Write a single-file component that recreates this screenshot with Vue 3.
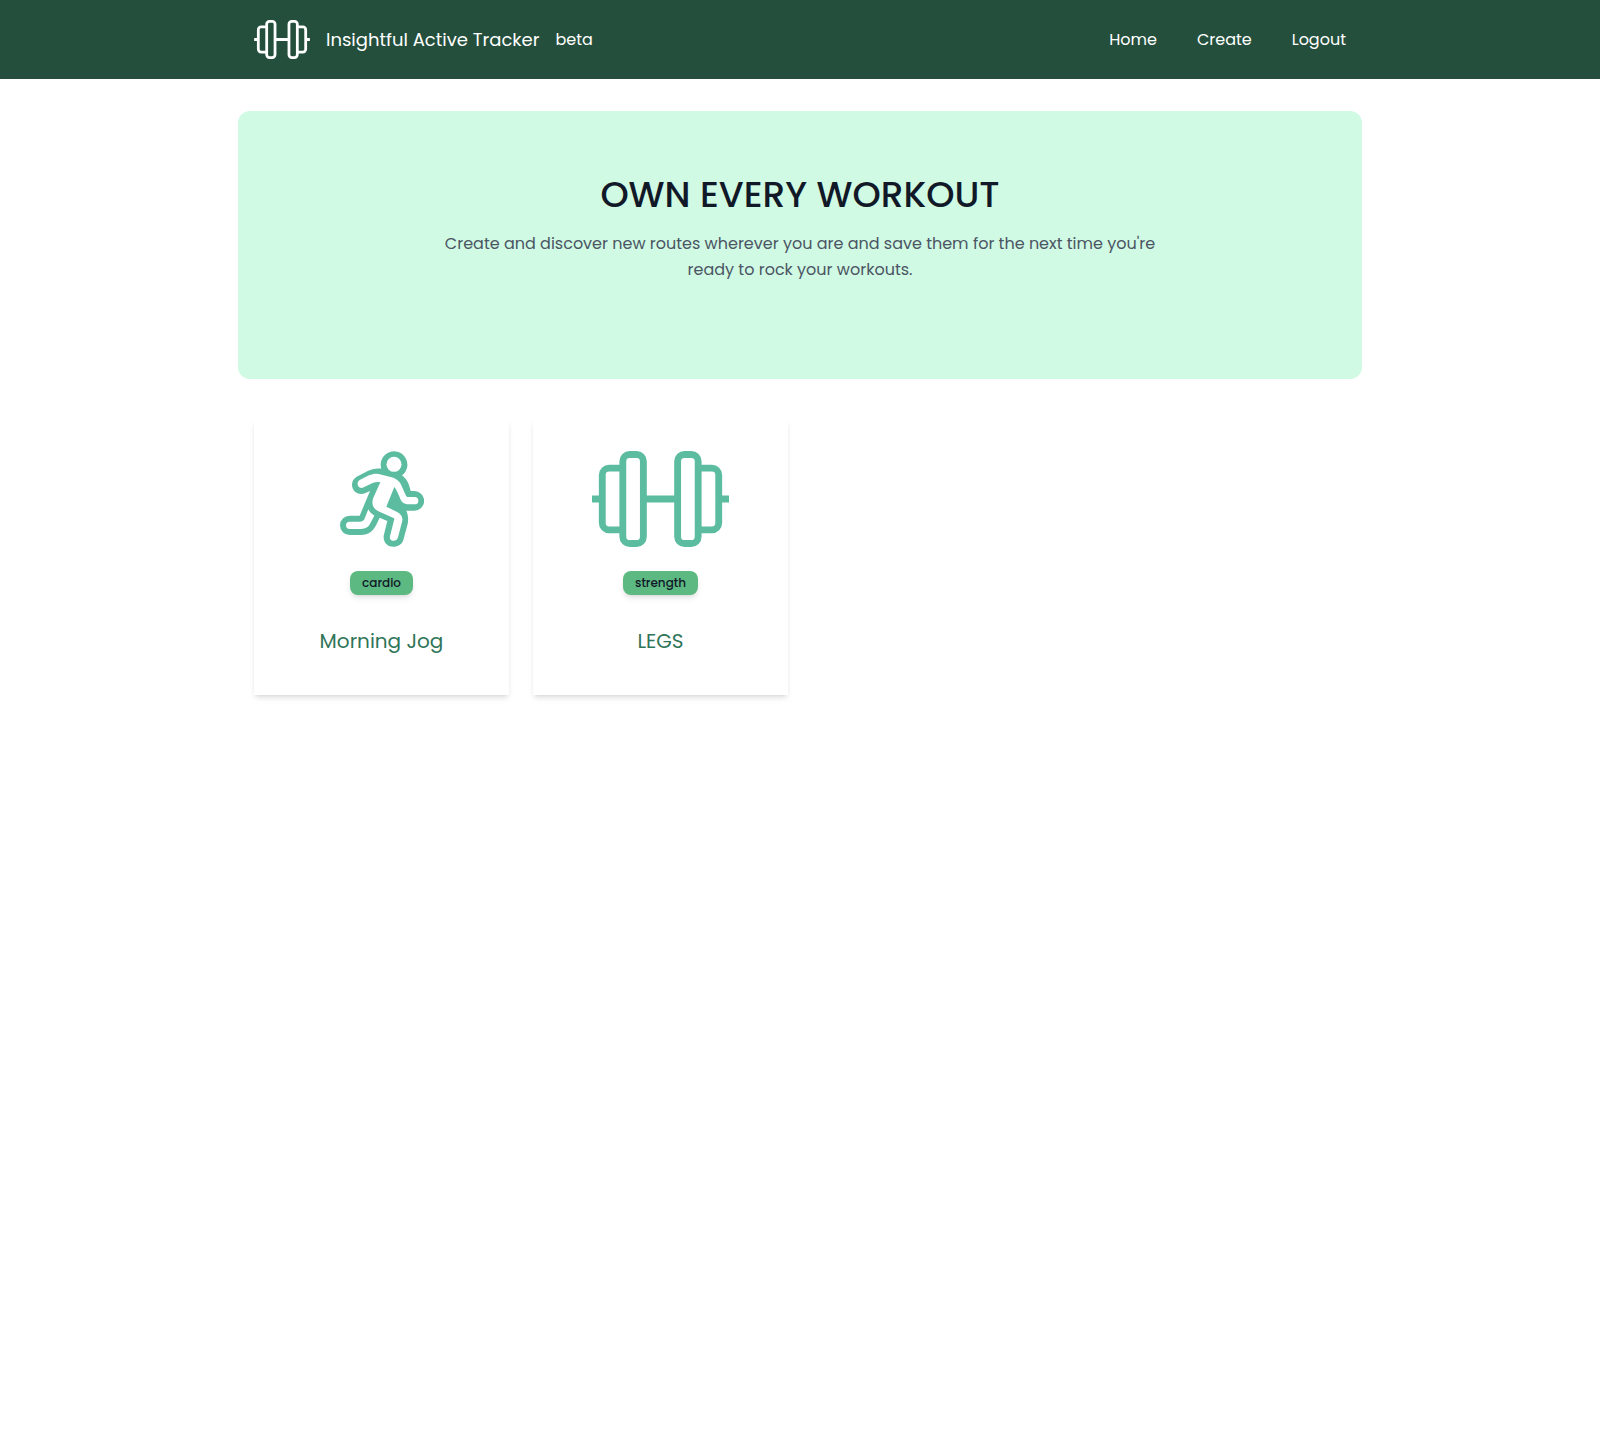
<script setup>
const links = ['Home', 'Create', 'Logout']
const workouts = [
  { title: 'Morning Jog', type: 'cardio' },
  { title: 'LEGS', type: 'strength' },
]
</script>

<template>
  <svg class="sprite" aria-hidden="true">
    <symbol id="dumbbell" viewBox="0 0 20 14">
      <g fill="none" stroke="currentColor">
        <rect x="4.5" y="0.5" width="3" height="13" rx="1" />
        <rect x="12.5" y="0.5" width="3" height="13" rx="1" />
        <path d="M4.5 2.5H2.5a1 1 0 0 0-1 1v7a1 1 0 0 0 1 1h2M15.5 2.5h2a1 1 0 0 1 1 1v7a1 1 0 0 1-1 1h-2M7.5 7h5" />
        <path d="M0 7h1.500M18.500 7h1.500" />
      </g>
    </symbol>
    <symbol id="runner" viewBox="45 33 252 288">
      <path
        fill="currentColor"
        d="M171 91A40 40 0 1 1 231 106C248 119 253 136 257 153H268A29.500 29.500 0 0 1 268 212H244C249 224 251 238 248 252L235 300C227 329 173 329 176 287L187 243 164 233 155 252C145 274 130 285 108 285H74A29 29 0 0 1 74 227H104L135 153 120 160C84 171 67 127 95 110L128 93C141 87 153 84 171 86Z"
      />
      <g fill="#fff">
        <circle cx="207" cy="73" r="22.500" />
        <path
          d="M104 120 132 106C146 100 157 100 170 104L200 112C219 117 228 130 233 145L242 165C244 170 246 171 250 171H269A11 11 0 0 1 269 193H247C237 192 230 187 226 177C221 164 214 148 208 141L184 200 215 215C230 222 235 234 231 246L219 292C215 308 191 305 195 289L208 237C208 235 207 234 204 233L160 214C142 205 139 188 145 173L166 127C158 125 151 126 143 129L116 142C100 150 91 128 104 120Z"
        />
        <path d="M130 208 118 238C115 243 111 245 105 245H74A11 11 0 0 0 74 267H108C122 267 131 261 136 250L148 227C141 222 134 217 130 208Z" />
      </g>
    </symbol>
  </svg>

  <header class="header">
    <div class="container bar">
      <a href="#" class="brand">
        <svg class="logo" aria-hidden="true"><use href="#dumbbell" /></svg>
        <span class="name">Insightful Active Tracker</span>
        <span>beta</span>
      </a>
      <nav class="nav">
        <a v-for="link in links" :key="link" href="#">{{ link }}</a>
      </nav>
    </div>
  </header>

  <main class="container">
    <section class="hero">
      <h1>OWN EVERY WORKOUT</h1>
      <p>
        Create and discover new routes wherever you are and save them for the
        next time you're ready to rock your workouts.
      </p>
    </section>

    <section class="cards">
      <a v-for="workout in workouts" :key="workout.title" href="#" class="card">
        <svg v-if="workout.type === 'cardio'" class="icon runner" aria-hidden="true"><use href="#runner" /></svg>
        <svg v-else class="icon dumbbell" aria-hidden="true"><use href="#dumbbell" /></svg>
        <span class="badge">{{ workout.type }}</span>
        <h2>{{ workout.title }}</h2>
      </a>
    </section>
  </main>
</template>

<style>
body {
  margin: 0;
  background: #fff;
  font-family: Poppins, Inter, sans-serif;
  font-size: 16px;
  line-height: 24px;
}
</style>

<style scoped>
a {
  color: inherit;
  text-decoration: none;
}

.sprite {
  position: absolute;
  width: 0;
  height: 0;
}

.container {
  box-sizing: border-box;
  max-width: 1124px;
  margin: 0 auto;
}

.header {
  background: #244f3c;
  color: #fff;
}

.bar {
  display: flex;
  align-items: center;
  justify-content: space-between;
  padding: 20px 16px;
}

.brand {
  display: flex;
  align-items: center;
  gap: 16px;
}

.logo {
  width: 56px;
  height: 39px;
}

.name {
  font-size: 18px;
}

.nav {
  display: flex;
  gap: 40px;
}

.hero {
  margin-top: 32px;
  padding: 64px 32px 96px;
  border-radius: 12px;
  background: #d0fae4;
  text-align: center;
}

.hero h1 {
  margin: 0 0 16px;
  color: #111827;
  font-size: 36px;
  font-weight: 500;
  line-height: 40px;
}

.hero p {
  max-width: 720px;
  margin: 0 auto;
  color: #4b5563;
  line-height: 26px;
}

.cards {
  display: grid;
  grid-template-columns: repeat(4, 1fr);
  gap: 24px;
  padding: 40px 16px;
}

.card {
  display: flex;
  flex-direction: column;
  align-items: center;
  padding: 32px 16px 40px;
  background: #fff;
  box-shadow: 0 4px 6px -1px rgba(0, 0, 0, 0.1), 0 2px 4px -2px rgba(0, 0, 0, 0.1);
}

.icon {
  height: 96px;
  color: #5cbca0;
}

.runner {
  width: 84px;
}

.dumbbell {
  width: 137px;
}

.badge {
  margin-top: 24px;
  padding: 0 12px;
  border-radius: 8px;
  background: #5cb981;
  box-shadow: 0 4px 6px -1px rgba(0, 0, 0, 0.1), 0 2px 4px -2px rgba(0, 0, 0, 0.1);
  color: #111827;
  font-size: 12px;
  font-weight: 500;
}

.card h2 {
  margin: 32px 0 0;
  color: #2f7558;
  font-size: 20px;
  font-weight: 400;
  line-height: 28px;
}
</style>
